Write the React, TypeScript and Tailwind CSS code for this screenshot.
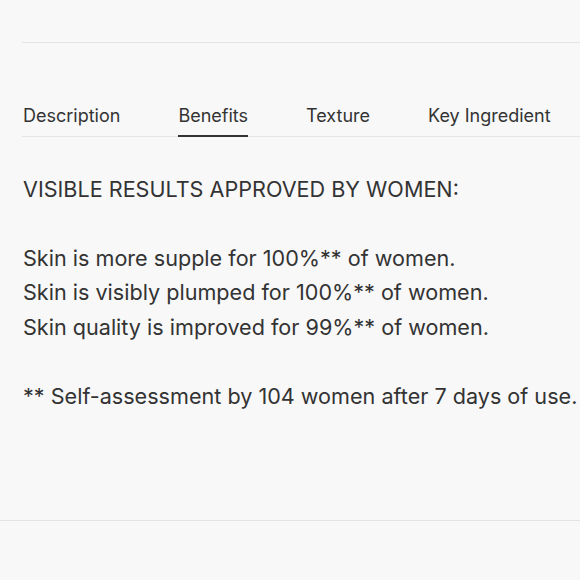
export default function App() {
  const tabs = ["Description", "Benefits", "Texture", "Key Ingredient"];
  return (
    <div className="w-[580px] h-[580px] overflow-hidden bg-[#f8f8f8] text-[#333333]" style={{ fontFamily: "Inter, 'Liberation Sans', sans-serif" }}>
      <div className="h-[42px]" />
      <div className="ml-[22px] border-t border-[#e4e4e4]" />
      <div className="h-[61px]" />
      <div className="ml-[22px] flex gap-[58px] border-b border-[#e6e6e6] pl-[1px] whitespace-nowrap">
        {tabs.map((t) => (
          <div
            key={t}
            className={
              "text-[18px] leading-[24px] pb-[7px] -mb-[1px] " +
              (t === "Benefits" ? "border-b-2 border-[#333333]" : "border-b-2 border-transparent")
            }
          >
            {t}
          </div>
        ))}
      </div>
      <div className="pl-[23px] text-[21.6px] leading-[34.5px] whitespace-nowrap">
        <div className="mt-[35px]">VISIBLE RESULTS APPROVED BY WOMEN:</div>
        <div className="h-[34px]" />
        <div>Skin is more supple for 100%** of women.</div>
        <div>Skin is visibly plumped for 100%** of women.</div>
        <div>Skin quality is improved for 99%** of women.</div>
        <div className="h-[35px]" />
        <div>** Self-assessment by 104 women after 7 days of use.</div>
      </div>
      <div className="h-[106px]" />
      <div className="border-t border-[#e4e4e4]" />
    </div>
  );
}
